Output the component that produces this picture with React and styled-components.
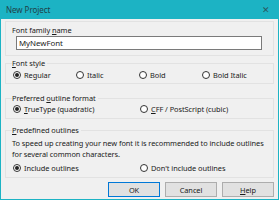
import React from 'react';
import styled, { createGlobalStyle } from 'styled-components';

const GlobalStyle = createGlobalStyle`
  html, body {
    margin: 0;
    padding: 0;
    background: #f0f0f0;
  }
  body {
    font-family: "Noto Sans", "Segoe UI", sans-serif;
    font-size: 7.4px;
    letter-spacing: -0.05px;
    color: #1a1a1a;
  }
`;

const Window = styled.div`
  width: 279px;
  height: 200px;
  box-sizing: border-box;
  border: 1px solid #1cb3c4;
  border-top: none;
  background: #f0f0f0;
  display: flex;
  flex-direction: column;
`;

const TitleBar = styled.div`
  height: 19px;
  margin: 0 -1px;
  background: #1cb3c4;
  display: flex;
  align-items: center;
  justify-content: space-between;
  padding: 0 9px 0 6px;
  color: #1f4248;
  font-size: 8px;
`;

const Close = styled.span`
  font-size: 9px;
  line-height: 1;
  color: #2a5860;
`;

const Body = styled.div`
  flex: 1;
  display: flex;
  flex-direction: column;
  padding: 2px 4px 2px 4px;
`;

const Panel = styled.div`
  border: 1px solid #e2e2e2;
  padding: 3px 6px 5px 6px;
  display: flex;
  flex-direction: column;
`;

const Group = styled.fieldset`
  margin: ${({ $top }) => $top}px 0 0 0;
  border: 1px solid #e2e2e2;
  padding: 0 6px ${({ $bottom }) => $bottom}px 6px;
  min-width: 0;
`;

const Legend = styled.legend`
  padding: 0 2px 0 0;
  line-height: 10px;
  height: 10px;
`;

const Label = styled.div`
  line-height: 10px;
  height: 10px;
`;

const Input = styled.div`
  margin: 1px 5px 0 4px;
  height: 14px;
  box-sizing: border-box;
  border: 1px solid #7a7a7a;
  background: #fff;
  padding: 0 2px;
  display: flex;
  align-items: center;
  font-size: 7.9px;
`;

const Text = styled.div`
  line-height: 11px;
  white-space: nowrap;
  margin-top: ${({ $top }) => $top || 0}px;
`;

const RadioRow = styled.div`
  display: grid;
  grid-template-columns: repeat(${({ $cols }) => $cols}, ${({ $width }) => $width}px);
  margin-top: ${({ $top }) => $top}px;
  padding-left: 1px;
`;

const Option = styled.div`
  display: flex;
  align-items: center;
  gap: 3px;
  height: 10px;
  white-space: nowrap;
`;

const Circle = styled.span`
  width: 8px;
  height: 8px;
  box-sizing: border-box;
  border-radius: 50%;
  border: 1px solid #333;
  background: #fff;
  display: flex;
  align-items: center;
  justify-content: center;
  &::after {
    content: '';
    width: 4px;
    height: 4px;
    border-radius: 50%;
    background: ${({ $checked }) => ($checked ? '#222' : 'transparent')};
  }
`;

const Buttons = styled.div`
  margin-top: auto;
  display: flex;
  justify-content: flex-end;
  gap: 5px;
`;

const Button = styled.div`
  width: 52px;
  height: 15px;
  box-sizing: border-box;
  border: 1px solid ${({ $primary }) => ($primary ? '#0078d7' : '#adadad')};
  background: #e1e1e1;
  display: flex;
  align-items: center;
  justify-content: center;
`;

const Radio = ({ checked, children }) => (
  <Option>
    <Circle $checked={checked} />
    <span>{children}</span>
  </Option>
);

export default function App() {
  return (
    <>
      <GlobalStyle />
      <Window>
        <TitleBar>
          <span>New Project</span>
          <Close>✕</Close>
        </TitleBar>
        <Body>
          <Panel>
            <Label>Font family <u>n</u>ame</Label>
            <Input>MyNewFont</Input>
          </Panel>
          <Group $top={2} $bottom={3}>
            <Legend><u>F</u>ont style</Legend>
            <RadioRow $cols={4} $width={63} $top={2}>
              <Radio checked>Regular</Radio>
              <Radio>Italic</Radio>
              <Radio>Bold</Radio>
              <Radio>Bold Italic</Radio>
            </RadioRow>
          </Group>
          <Group $top={9} $bottom={4}>
            <Legend>Preferred <u>o</u>utline format</Legend>
            <RadioRow $cols={2} $width={127} $top={1}>
              <Radio checked><u>T</u>rueType (quadratic)</Radio>
              <Radio><u>C</u>FF / PostScript (cubic)</Radio>
            </RadioRow>
          </Group>
          <Group $top={6} $bottom={4}>
            <Legend><u>P</u>redefined outlines</Legend>
            <Text $top={3}>To speed up creating your new font it is recommended to include outlines</Text>
            <Text>for several common characters.</Text>
            <RadioRow $cols={2} $width={127} $top={3}>
              <Radio checked>Include outlines</Radio>
              <Radio>Don't include outlines</Radio>
            </RadioRow>
          </Group>
          <Buttons>
            <Button $primary>OK</Button>
            <Button>Cancel</Button>
            <Button><u>H</u>elp</Button>
          </Buttons>
        </Body>
      </Window>
    </>
  );
}
